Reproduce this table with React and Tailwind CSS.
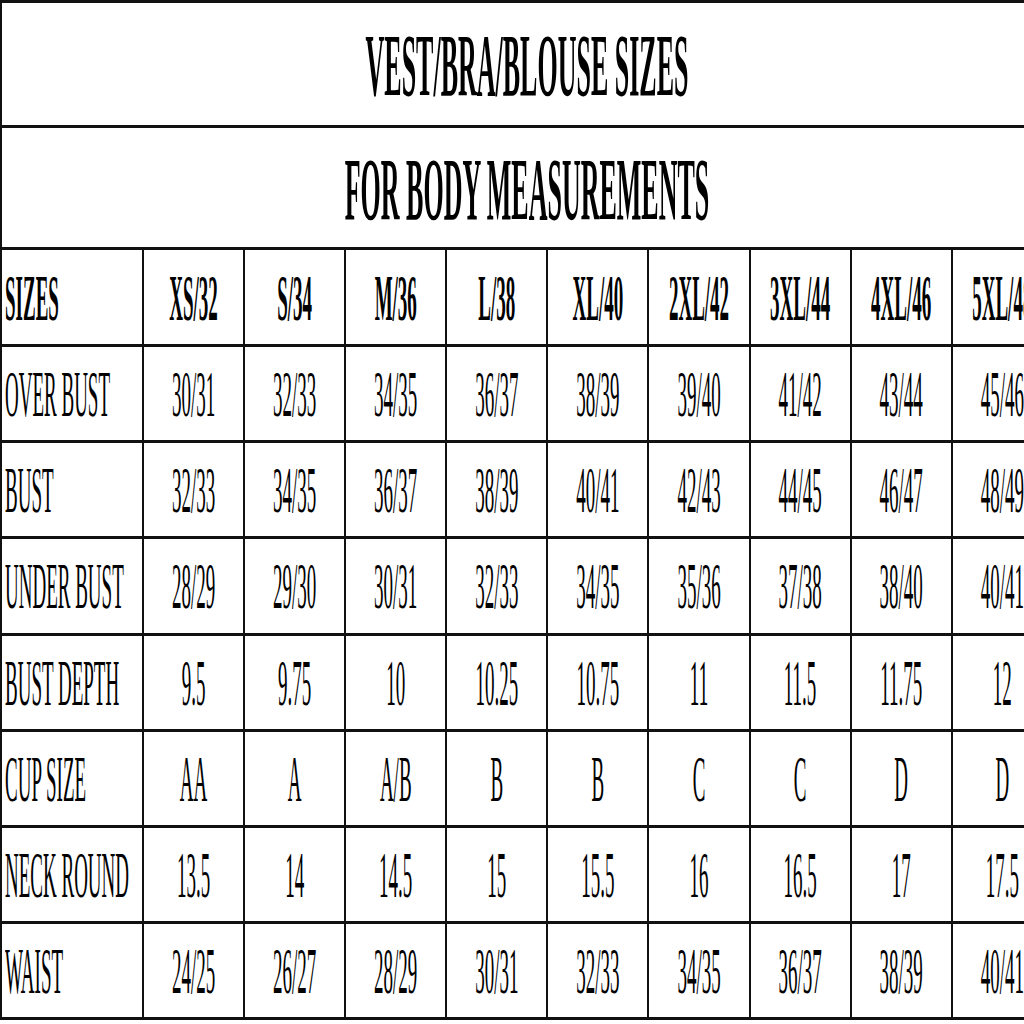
import React from "react";

const rows = [
  { label: "SIZES", bold: true, vals: ["XS/32", "S/34", "M/36", "L/38", "XL/40", "2XL/42", "3XL/44", "4XL/46", "5XL/48"] },
  { label: "OVER BUST", vals: ["30/31", "32/33", "34/35", "36/37", "38/39", "39/40", "41/42", "43/44", "45/46"] },
  { label: "BUST", vals: ["32/33", "34/35", "36/37", "38/39", "40/41", "42/43", "44/45", "46/47", "48/49"] },
  { label: "UNDER BUST", vals: ["28/29", "29/30", "30/31", "32/33", "34/35", "35/36", "37/38", "38/40", "40/41"] },
  { label: "BUST DEPTH", vals: ["9.5", "9.75", "10", "10.25", "10.75", "11", "11.5", "11.75", "12"] },
  { label: "CUP SIZE", vals: ["AA", "A", "A/B", "B", "B", "C", "C", "D", "D"] },
  { label: "NECK ROUND", vals: ["13.5", "14", "14.5", "15", "15.5", "16", "16.5", "17", "17.5"] },
  { label: "WAIST", vals: ["24/25", "26/27", "28/29", "30/31", "32/33", "34/35", "36/37", "38/39", "40/41"] },
];

function Txt({ children, bold }) {
  return (
    <span
      className={
        "inline-block whitespace-nowrap text-[19px] leading-none text-black scale-y-[3.5] " +
        (bold ? "font-bold" : "font-normal")
      }
    >
      {children}
    </span>
  );
}

export default function App() {
  return (
    <div
      className="w-[1024px] h-[1024px] overflow-hidden bg-white"
      style={{ fontFamily: '"Liberation Serif", "Times New Roman", serif' }}
    >
      <div className="w-[1052px] border-t-[3px] border-[#111]">
        <div className="h-[125px] box-border border-b-[3px] border-l-2 border-[#111] flex items-center justify-center pt-[6px]">
          <span className="inline-block whitespace-nowrap text-[26px] leading-none font-bold text-black scale-y-[3.45]">
            VEST/BRA/BLOUSE SIZES
          </span>
        </div>
        <div className="h-[122px] box-border border-b-[3px] border-l-2 border-[#111] flex items-center justify-center pt-[6px]">
          <span className="inline-block whitespace-nowrap text-[26px] leading-none font-bold text-black scale-y-[3.45]">
            FOR BODY MEASUREMENTS
          </span>
        </div>
        {rows.map((r, i) => (
          <div
            key={i}
            className={
              "flex box-border border-b-[3px] border-[#111] " +
              (i === 0 ? "h-[97px]" : "h-[96.2px]")
            }
          >
            <div className="w-[142px] shrink-0 border-l-2 border-[#111] flex items-center pl-[3px]">
              <Txt bold={r.bold}>{r.label}</Txt>
            </div>
            {r.vals.map((v, j) => (
              <div
                key={j}
                className="w-[101.1px] shrink-0 border-l-2 border-[#111] flex items-center justify-center"
              >
                <Txt bold={r.bold}>{v}</Txt>
              </div>
            ))}
          </div>
        ))}
      </div>
    </div>
  );
}
